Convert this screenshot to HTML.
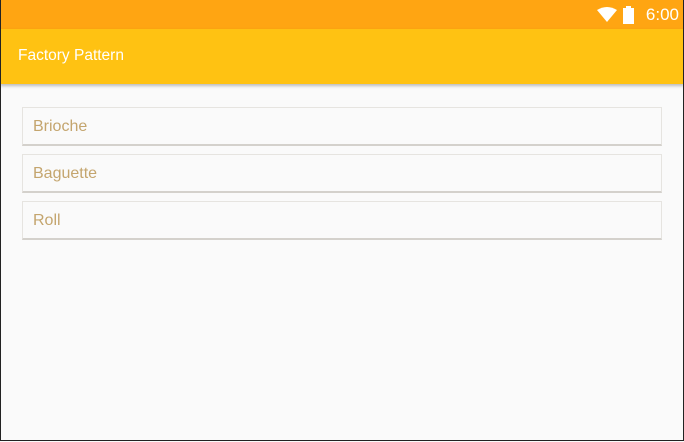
<!DOCTYPE html>
<html><head><meta charset="utf-8"><style>
body{margin:0;width:684px;height:442px;overflow:hidden;background:#fafafa;font-family:"Liberation Sans",sans-serif;position:relative}
.frame{position:absolute;left:0;top:0;width:682px;height:440px;border:1px solid #222;border-top:none;box-sizing:content-box}
.status{position:absolute;left:0;top:0;width:684px;height:29px;background:#ffa512}
.bar{position:absolute;left:0;top:29px;width:684px;height:55px;background:#ffc212;box-shadow:0 2px 3px rgba(0,0,0,.25)}
.bar span{position:absolute;left:18px;top:18px;color:#fff;font-size:15.5px}
.time{position:absolute;right:5px;top:5px;color:#fff;font-size:17px}
.card{position:absolute;left:22px;width:640px;height:39px;background:#fafafa;border:1px solid #e6e4e0;border-bottom:2px solid #d4d1cc;box-sizing:border-box}
.card span{position:absolute;left:10px;top:10px;color:#c4a56e;font-size:16px}
</style></head><body>
<div class="status">
<svg style="position:absolute;left:597px;top:7px" width="20" height="16" viewBox="0 0 20 16"><path d="M0 3 Q10 -3 20 3 L10 15 Z" fill="#fff"/></svg>
<svg style="position:absolute;left:623px;top:6px" width="11" height="18" viewBox="0 0 11 18"><rect x="3" y="0" width="5" height="2" fill="#fff"/><rect x="0" y="2" width="11" height="16" fill="#fff"/></svg>
<div class="time">6:00</div>
</div>
<div class="bar"><span>Factory Pattern</span></div>
<div class="card" style="top:107px"><span>Brioche</span></div>
<div class="card" style="top:154px"><span>Baguette</span></div>
<div class="card" style="top:201px"><span>Roll</span></div>
<div class="frame"></div>
</body></html>
